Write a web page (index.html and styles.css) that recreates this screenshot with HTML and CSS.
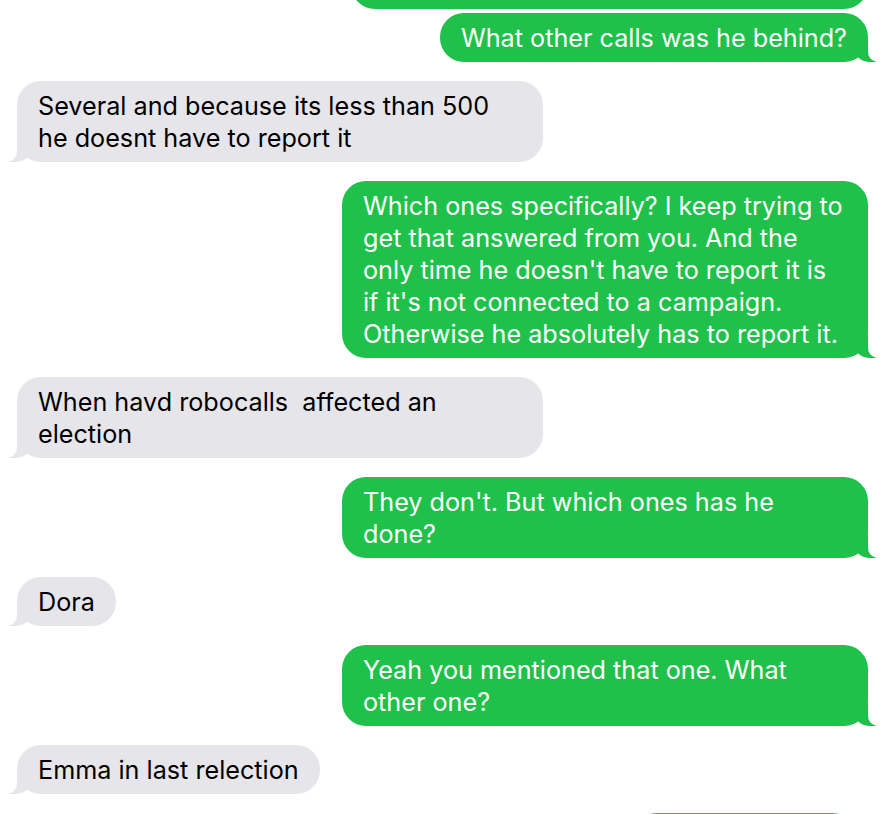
FILE: index.html
```html
<!DOCTYPE html>
<html lang="en">
<head>
    <meta charset="UTF-8">
    <title>Messages</title>
    <link rel="stylesheet" href="styles.css">
</head>
<body>

<div class="thread">
    <div class="msg sent cut">Okay, so you tell me what you got going</div>
    <div class="msg sent">What other calls was he behind?</div>
    <div class="msg received">Several and because its less than 500 he doesnt have to report it</div>
    <div class="msg sent">Which ones specifically? I keep trying to get that answered from you. And the only time he doesn't have to report it is if it's not connected to a campaign. Otherwise he absolutely has to report it.</div>
    <div class="msg received">When havd robocalls&nbsp; affected an election</div>
    <div class="msg sent">They don't. But which ones has he done?</div>
    <div class="msg received">Dora</div>
    <div class="msg sent">Yeah you mentioned that one. What other one?</div>
    <div class="msg received">Emma in last relection</div>
    <div class="msg sent last">And what else?</div>
</div>

</body>
</html>
```

FILE: styles.css
```css
body {
    margin: 0;
    background: #fff;
    font-family: Inter, "Noto Sans", sans-serif;
    overflow: hidden;
}
.thread {
    display: flex;
    flex-direction: column;
    gap: 19px;
    padding: 0 20px 0 17px;
}
.msg {
    position: relative;
    max-width: 484px;
    padding: 8.5px 21px;
    border-radius: 24px;
    font-size: 25.2px;
    line-height: 32px;
}
.sent {
    align-self: flex-end;
    background: #20c14b;
    color: #fff;
}
.received {
    align-self: flex-start;
    background: #e5e5ea;
    color: #000;
}
.cut {
    margin-top: -40px;
    margin-bottom: -15px;
}
.last {
    margin-right: 12px;
}

/* tails */
.msg::before,
.msg::after {
    content: "";
    position: absolute;
    bottom: 0;
    height: 22px;
}
.cut::before,
.cut::after {
    display: none;
}
.sent::before {
    right: -8px;
    width: 22px;
    background: #20c14b;
    border-bottom-left-radius: 16px 14px;
}
.sent::after {
    right: -12px;
    width: 12px;
    background: #fff;
    border-bottom-left-radius: 10px;
}
.received::before {
    left: -8px;
    width: 22px;
    background: #e5e5ea;
    border-bottom-right-radius: 16px 14px;
}
.received::after {
    left: -12px;
    width: 12px;
    background: #fff;
    border-bottom-right-radius: 10px;
}
```
